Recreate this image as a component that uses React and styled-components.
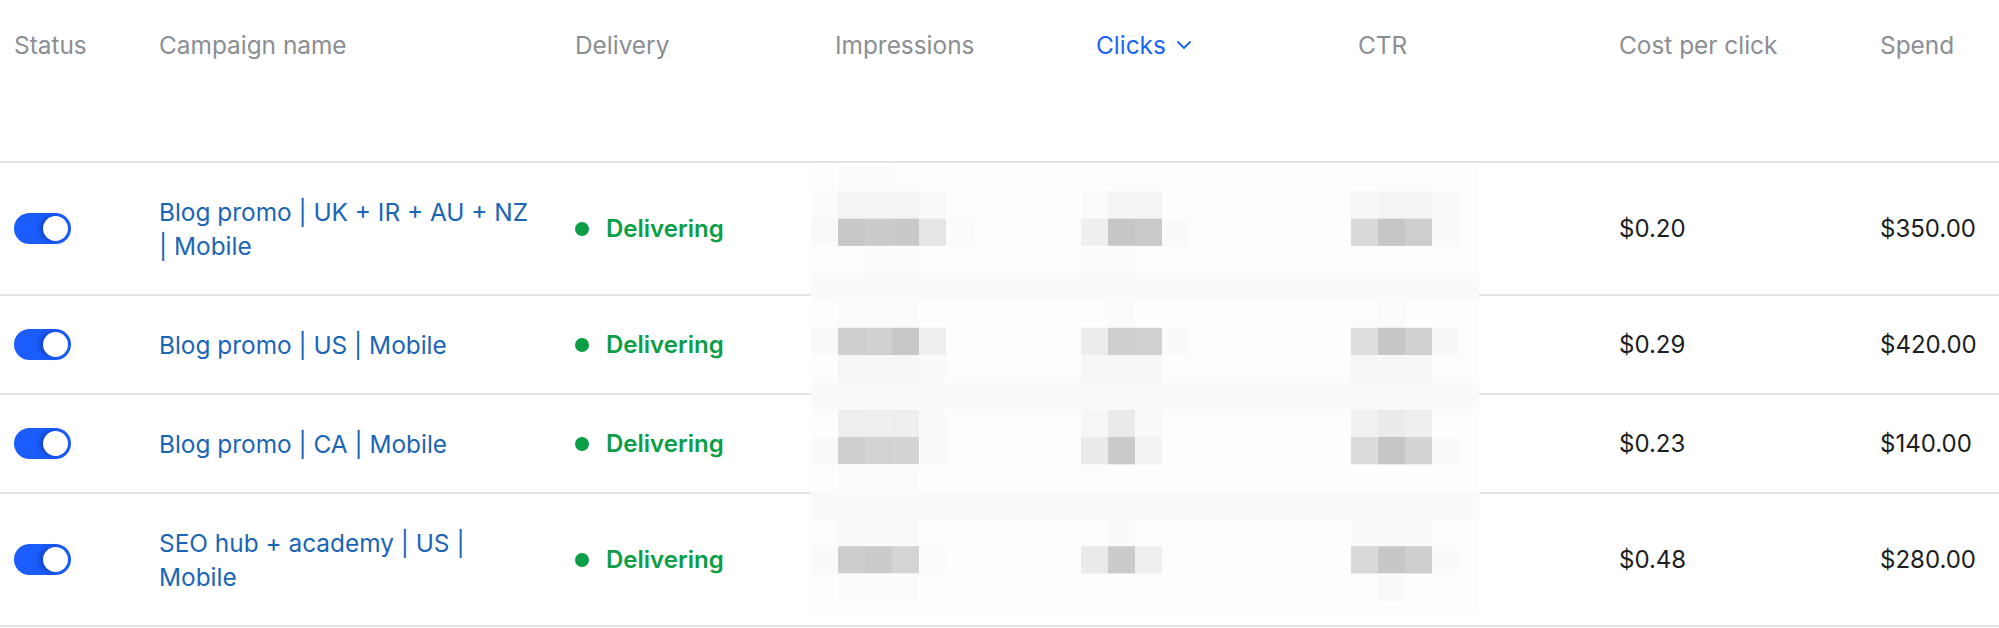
import styled, { createGlobalStyle } from "styled-components";

const GlobalStyle = createGlobalStyle`
  html, body {
    margin: 0;
    padding: 0;
    background: #ffffff;
    overflow: hidden;
  }
  body {
    font-family: Inter, "Liberation Sans", Arial, sans-serif;
    -webkit-font-smoothing: antialiased;
  }
`;

const columns = "145px 416px 260px 261px 262px 261px 261px 1fr";

const Table = styled.div`
  position: relative;
  width: 100%;
`;

const HeaderRow = styled.div`
  display: grid;
  grid-template-columns: ${columns};
  align-items: start;
  height: 133px;
  padding: 28px 0 0 14px;
  border-bottom: 2px solid #e2e5e7;
`;

const HeadCell = styled.div`
  display: flex;
  align-items: center;
  gap: 10px;
  font-size: 24.4px;
  line-height: 34px;
  color: ${(p) => (p.active ? "#1b64f5" : "#8b8e93")};
`;

const Row = styled.div`
  display: grid;
  grid-template-columns: ${columns};
  align-items: center;
  padding: 31.5px 0 31.5px 14px;
  border-bottom: 2px solid #e2e5e7;
`;

const Toggle = styled.div`
  position: relative;
  width: 57px;
  height: 31px;
  border-radius: 16px;
  background: #1a5cfc;
`;

const Knob = styled.span`
  position: absolute;
  right: 3px;
  top: 3px;
  width: 25px;
  height: 25px;
  border-radius: 50%;
  background: #ffffff;
  box-shadow: -3px 0 5px rgba(0, 20, 90, 0.35);
`;

const CampaignName = styled.div`
  max-width: 376px;
  font-size: 24.4px;
  line-height: 34px;
  color: #1b65b6;
`;

const Delivery = styled.div`
  display: flex;
  align-items: center;
  gap: 17px;
  font-size: 24px;
  font-weight: 600;
  line-height: 34px;
  color: #0b9e47;
`;

const Dot = styled.span`
  width: 14px;
  height: 14px;
  border-radius: 50%;
  background: #0b9e47;
`;

const Amount = styled.div`
  font-size: 24px;
  line-height: 34px;
  color: #1c1e21;
  white-space: nowrap;
`;

const Mosaic = styled.svg`
  position: absolute;
  left: 811px;
  top: 164px;
`;

const campaigns = [
  { name: "Blog promo | UK + IR + AU + NZ | Mobile", cpc: "$0.20", spend: "$350.00" },
  { name: "Blog promo | US | Mobile", cpc: "$0.29", spend: "$420.00" },
  { name: "Blog promo | CA | Mobile", cpc: "$0.23", spend: "$140.00" },
  { name: "SEO hub + academy | US | Mobile", cpc: "$0.48", spend: "$280.00" },
];

// pixelated (blurred) numbers over impressions / clicks / CTR
const mosaic = {
  0: [[1, "#fbfbfb"], [2, "#fbfbfb"]],
  1: [[0, "#fbfbfb"], [1, "#f4f4f4"], [2, "#f5f5f5"], [3, "#f4f4f4"], [4, "#f9f9f9"], [10, "#fbfbfb"], [11, "#f5f5f5"], [12, "#f5f5f5"], [20, "#f7f7f7"], [21, "#f4f4f4"], [22, "#f4f4f4"], [23, "#fafafa"]],
  2: [[0, "#f9f9f9"], [1, "#c8c8c8"], [2, "#cbcbcb"], [3, "#c9c9c9"], [4, "#e6e6e6"], [5, "#fbfbfb"], [10, "#efefef"], [11, "#c7c7c7"], [12, "#cacaca"], [13, "#fafafa"], [20, "#dadada"], [21, "#c6c6c6"], [22, "#cecece"], [23, "#fafafa"]],
  3: [[2, "#fcfcfc"], [3, "#fcfcfc"], [10, "#fcfcfc"], [11, "#fcfcfc"]],
  5: [[1, "#fbfbfb"], [2, "#fbfbfb"], [3, "#fbfbfb"], [11, "#fbfbfb"], [21, "#fbfbfb"]],
  6: [[0, "#f9f9f9"], [1, "#cfcfcf"], [2, "#d1d1d1"], [3, "#c8c8c8"], [4, "#eeeeee"], [10, "#ececec"], [11, "#cfcfcf"], [12, "#d0d0d0"], [13, "#fafafa"], [20, "#dedede"], [21, "#c7c7c7"], [22, "#d1d1d1"], [23, "#f8f8f8"]],
  7: [[1, "#f6f6f6"], [2, "#f6f6f6"], [3, "#f6f6f6"], [4, "#fafafa"], [10, "#f7f7f7"], [11, "#f7f7f7"], [12, "#f7f7f7"], [20, "#f6f6f6"], [21, "#f6f6f6"], [22, "#f6f6f6"]],
  9: [[1, "#eeeeee"], [2, "#efefef"], [3, "#eeeeee"], [4, "#fafafa"], [10, "#f6f6f6"], [11, "#eaeaea"], [12, "#f9f9f9"], [20, "#f1f1f1"], [21, "#ebebeb"], [22, "#efefef"]],
  10: [[0, "#fafafa"], [1, "#cfcfcf"], [2, "#d2d2d2"], [3, "#d3d3d3"], [4, "#fafafa"], [10, "#ebebeb"], [11, "#cbcbcb"], [12, "#f2f2f2"], [20, "#dcdcdc"], [21, "#c6c6c6"], [22, "#d3d3d3"], [23, "#fafafa"]],
  11: [[1, "#fbfbfb"], [2, "#fbfbfb"], [3, "#fbfbfb"]],
  13: [[1, "#fafafa"], [2, "#fafafa"], [3, "#fafafa"], [11, "#f9f9f9"], [20, "#f9f9f9"], [21, "#f9f9f9"], [22, "#f9f9f9"]],
  14: [[0, "#fafafa"], [1, "#cdcdcd"], [2, "#cbcbcb"], [3, "#d4d4d4"], [4, "#fcfcfc"], [10, "#eaeaea"], [11, "#cbcbcb"], [12, "#efefef"], [20, "#d9d9d9"], [21, "#c7c7c7"], [22, "#cfcfcf"], [23, "#fafafa"]],
  15: [[1, "#fbfbfb"], [2, "#fbfbfb"], [3, "#fbfbfb"], [21, "#f9f9f9"]],
};
const lineRows = [4, 8, 12];
const CELL_W = 27;
const CELL_H = 27.3;
const MOSAIC_W = 668;
const MOSAIC_H = 451;

const Pixelation = () => (
  <Mosaic width={MOSAIC_W} height={MOSAIC_H} viewBox={`0 0 ${MOSAIC_W} ${MOSAIC_H}`}>
    <rect width={MOSAIC_W} height={MOSAIC_H} fill="#fdfdfd" />
    {lineRows.map((r) => (
      <rect key={`l${r}`} x="0" y={r * CELL_H} width={MOSAIC_W} height={CELL_H} fill="#fafafa" />
    ))}
    {Object.entries(mosaic).map(([r, cells]) =>
      cells.map(([c, fill]) => (
        <rect key={`${r}-${c}`} x={c * CELL_W} y={r * CELL_H} width={CELL_W} height={CELL_H} fill={fill} />
      ))
    )}
  </Mosaic>
);

const Chevron = () => (
  <svg width="16" height="10" viewBox="0 0 16 10" fill="none">
    <polyline points="2,2 8,8 14,2" stroke="#1b64f5" strokeWidth="1.8" strokeLinecap="round" strokeLinejoin="round" />
  </svg>
);

const App = () => (
  <>
    <GlobalStyle />
    <Table>
      <HeaderRow>
        <HeadCell>Status</HeadCell>
        <HeadCell>Campaign name</HeadCell>
        <HeadCell>Delivery</HeadCell>
        <HeadCell>Impressions</HeadCell>
        <HeadCell active>
          Clicks <Chevron />
        </HeadCell>
        <HeadCell>CTR</HeadCell>
        <HeadCell>Cost per click</HeadCell>
        <HeadCell>Spend</HeadCell>
      </HeaderRow>
      {campaigns.map((c) => (
        <Row key={c.name}>
          <Toggle>
            <Knob />
          </Toggle>
          <CampaignName>{c.name}</CampaignName>
          <Delivery>
            <Dot />
            Delivering
          </Delivery>
          <div />
          <div />
          <div />
          <Amount>{c.cpc}</Amount>
          <Amount>{c.spend}</Amount>
        </Row>
      ))}
      <Pixelation />
    </Table>
  </>
);

export default App;
